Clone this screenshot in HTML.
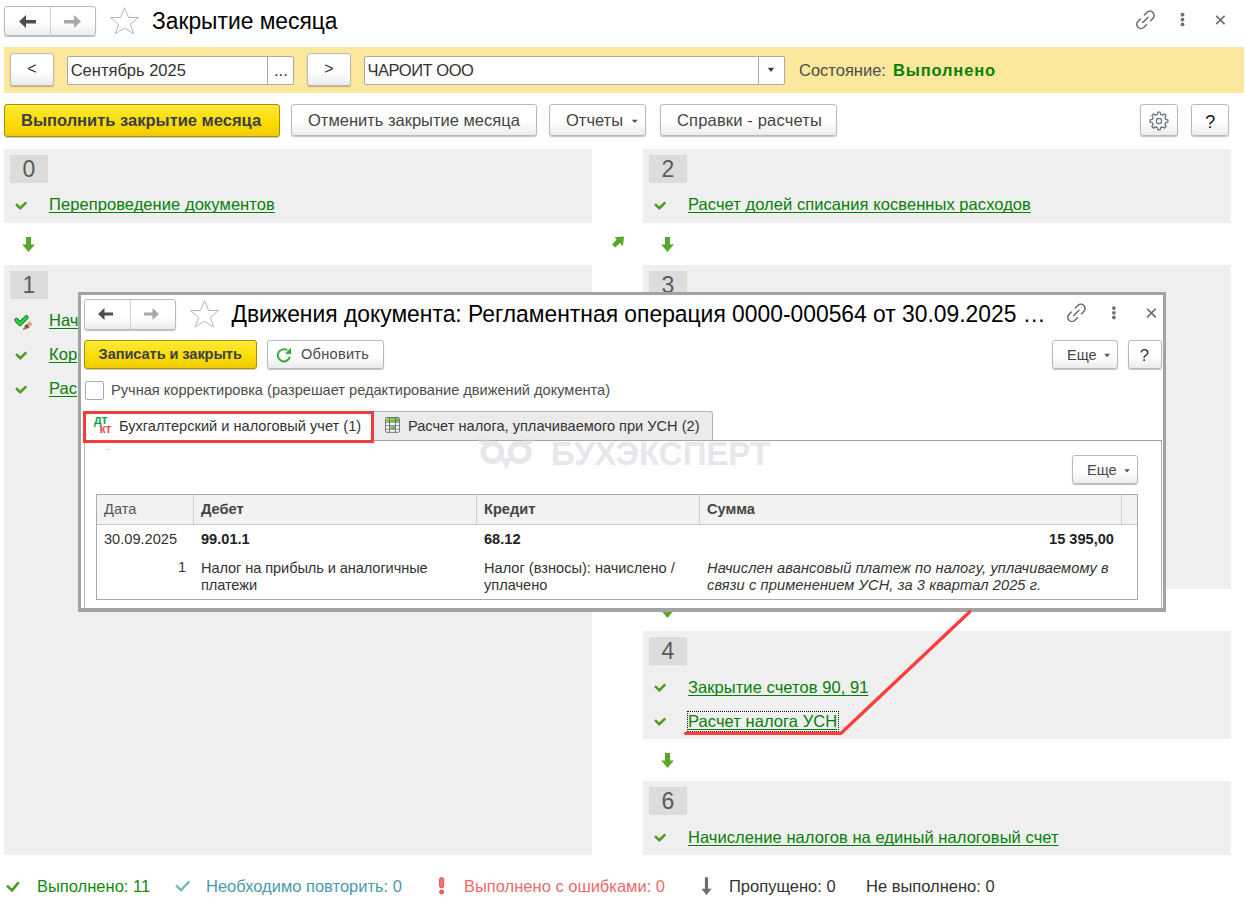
<!DOCTYPE html>
<html><head><meta charset="utf-8">
<style>
*{box-sizing:border-box;margin:0;padding:0}
html,body{width:1245px;height:906px;overflow:hidden;background:#fff;font-family:"Liberation Sans",sans-serif;color:#333}
.a{position:absolute}
.t{position:absolute;white-space:nowrap;line-height:1}
.btn{position:absolute;border:1px solid #b9b9b9;border-radius:3px;background:linear-gradient(#fff 0%,#fff 55%,#ececec 100%);box-shadow:0 1px 1px rgba(0,0,0,.25)}
.ybtn{position:absolute;border:1px solid #a99000;border-radius:3px;background:linear-gradient(#ffe93a 0%,#fbdb00 60%,#efcc00 100%);box-shadow:0 1px 1px rgba(0,0,0,.2)}
.inp{position:absolute;border:1px solid #a9a9a9;border-radius:2px;background:#fff}
.panel{position:absolute;background:#efefef}
.num{position:absolute;width:38px;height:28px;background:#dcdcdc;color:#5a5a5a;font-size:23px;line-height:28px;text-align:center}
.lnk{position:absolute;white-space:nowrap;color:#058005;text-decoration:underline;text-decoration-skip-ink:none;text-underline-offset:2px;font-size:16.5px;line-height:1;letter-spacing:0.065px}
.chk{position:absolute;width:13px;height:10px}
</style></head><body>

<!-- Header -->
<div class="btn" style="left:4px;top:6px;width:92px;height:30px"></div>
<div class="a" style="left:50px;top:7px;width:1px;height:29px;background:#cfcfcf"></div>
<svg class="a" style="left:19px;top:15px" width="18" height="14" viewBox="0 0 18 14"><path d="M0 6.5 L7 0 L7 5 L17 5 L17 8.5 L7 8.5 L7 13 Z" fill="#4d4d4d"/></svg>
<svg class="a" style="left:64px;top:15px" width="18" height="14" viewBox="0 0 18 14"><path d="M17 6.5 L10 0 L10 5 L0 5 L0 8.5 L10 8.5 L10 13 Z" fill="#a8a8a8"/></svg>
<svg class="a" style="left:0;top:0;overflow:visible" width="1" height="1"><path d="M124.5 7.8 L128.6 17.5 L138.4 17.5 L130.3 24.4 L133.8 33.8 L124.5 28 L115.2 33.8 L118.6 24.4 L110.6 17.5 L120.4 17.5 Z" fill="none" stroke="#b1b7bf" stroke-width="1"/></svg>
<div class="t" style="left:152px;top:10px;font-size:22.8px;color:#000;transform:scaleY(1.08);transform-origin:0 19.3px">Закрытие месяца</div>

<!-- Top right icons -->
<svg class="a" style="left:0;top:0;overflow:visible" width="1" height="1"><g transform="translate(1145.4 19.9) rotate(-45)" fill="none" stroke="#666" stroke-width="1.4" stroke-linecap="round"><path d="M2.7 -4.2 L6.3 -4.2 A4.2 4.2 0 0 1 6.3 4.2 L2.9 4.2"/><path d="M-2.7 4.2 L-6.3 4.2 A4.2 4.2 0 0 1 -6.3 -4.2 L-2.9 -4.2"/><path d="M-3.8 0 L3.8 0"/></g></svg>
<svg class="a" style="left:0;top:0;overflow:visible" width="1" height="1"><g fill="#707070"><circle cx="1182.5" cy="14.7" r="1.9"/><circle cx="1182.5" cy="19.549999999999997" r="1.9"/><circle cx="1182.5" cy="24.4" r="1.9"/></g></svg>
<svg class="a" style="left:0;top:0;overflow:visible" width="1" height="1"><path d="M1216.2 15.7 L1224.6000000000001 24.099999999999998 M1224.6000000000001 15.7 L1216.2 24.099999999999998" stroke="#6a6a6a" stroke-width="1.6"/></svg>

<!-- Yellow bar -->
<div class="a" style="left:4px;top:47px;width:1240px;height:46px;background:#fbe89c"></div>
<div class="btn" style="left:10px;top:53px;width:44px;height:33px"></div>
<div class="t" style="left:27.3px;top:61px;font-size:16px;color:#333">&lt;</div>
<div class="inp" style="left:67px;top:56px;width:227px;height:29px"></div>
<div class="a" style="left:267px;top:57px;width:1px;height:27px;background:#a9a9a9"></div>
<div class="t" style="left:70.7px;top:62px;font-size:16.5px;color:#333">Сентябрь 2025</div>
<div class="t" style="left:274px;top:62px;font-size:16.5px;color:#333">...</div>
<div class="btn" style="left:307px;top:53px;width:44px;height:33px"></div>
<div class="t" style="left:324.2px;top:61px;font-size:16px;color:#333">&gt;</div>
<div class="inp" style="left:364px;top:56px;width:421px;height:29px"></div>
<div class="a" style="left:758px;top:57px;width:1px;height:27px;background:#a9a9a9"></div>
<div class="t" style="left:367.5px;top:62px;font-size:16.5px;color:#333;letter-spacing:-0.45px">ЧАРОИТ ООО</div>
<svg class="a" style="left:0;top:0;overflow:visible" width="1" height="1"><path d="M767.8 67.8 L774.2 67.8 L771 72 Z" fill="#3a3a3a"/></svg>
<div class="t" style="left:799px;top:62px;font-size:16.5px;color:#4d4d4d">Состояние:</div>
<div class="t" style="left:893px;top:62px;font-size:16.5px;font-weight:bold;color:#0a800a;letter-spacing:0.85px">Выполнено</div>

<!-- Toolbar -->
<div class="ybtn" style="left:4px;top:104px;width:276px;height:33px"></div>
<div class="t" style="left:21px;top:112px;font-size:16.5px;font-weight:bold;color:#3b3f4a">Выполнить закрытие месяца</div>
<div class="btn" style="left:291px;top:104px;width:246px;height:32px"></div>
<div class="t" style="left:308px;top:112px;font-size:16.5px;color:#444">Отменить закрытие месяца</div>
<div class="btn" style="left:549px;top:104px;width:97px;height:32px"></div>
<div class="t" style="left:566px;top:112px;font-size:16.5px;color:#444">Отчеты</div>
<svg class="a" style="left:0;top:0;overflow:visible" width="1" height="1"><path d="M631.6 119.8 L637.8 119.8 L634.7 123 Z" fill="#555"/></svg>
<div class="btn" style="left:660px;top:104px;width:177px;height:32px"></div>
<div class="t" style="left:677px;top:112px;font-size:16.5px;color:#444;letter-spacing:0.17px">Справки - расчеты</div>
<div class="btn" style="left:1140px;top:104px;width:38px;height:32px"></div>
<div class="btn" style="left:1191px;top:104px;width:38px;height:32px"></div>
<div class="t" style="left:1205.2px;top:113.3px;font-size:18px;color:#111">?</div>

<!-- Panels left -->
<div class="panel" style="left:4px;top:149px;width:588px;height:74px"></div>
<div class="num" style="left:10px;top:155px">0</div>
<div class="lnk" style="left:49px;top:196px">Перепроведение документов</div>

<div class="panel" style="left:4px;top:265px;width:588px;height:590px"></div>
<div class="num" style="left:10px;top:271px">1</div>
<div class="lnk" style="left:49px;top:312px">Нач</div>
<div class="lnk" style="left:49px;top:346px">Кор</div>
<div class="lnk" style="left:49px;top:380px">Рас</div>

<!-- Panels right -->
<div class="panel" style="left:643px;top:149px;width:588px;height:74px"></div>
<div class="num" style="left:649px;top:155px">2</div>
<div class="lnk" style="left:688px;top:196px">Расчет долей списания косвенных расходов</div>

<div class="panel" style="left:643px;top:265px;width:588px;height:324px"></div>
<div class="num" style="left:649px;top:271px">3</div>

<div class="panel" style="left:643px;top:631px;width:588px;height:108px"></div>
<div class="num" style="left:649px;top:637px">4</div>
<div class="lnk" style="left:688px;top:679px">Закрытие счетов 90, 91</div>
<div class="lnk" style="left:688px;top:713px">Расчет налога УСН</div>

<div class="panel" style="left:643px;top:781px;width:588px;height:74px"></div>
<div class="num" style="left:649px;top:787px">6</div>
<div class="lnk" style="left:688px;top:829px">Начисление налогов на единый налоговый счет</div>


<!-- icons: checks & arrows -->
<svg width="0" height="0" style="position:absolute"><defs>
<path id="ck" d="M2 4.2 L6.3 8.2 L12.3 2.4" fill="none" stroke="#4a9c1c" stroke-width="2.5"/>
<path id="dn" d="M4 0 H9 V7.5 H12.8 L6.5 15 L0.2 7.5 H4 Z" fill="#58a62a"/>
</defs></svg>
<svg class="a" style="left:14px;top:200px" width="14" height="11"><use href="#ck"/></svg>
<svg class="a" style="left:653px;top:200px" width="14" height="11"><use href="#ck"/></svg>
<svg class="a" style="left:14px;top:350px" width="14" height="11"><use href="#ck"/></svg>
<svg class="a" style="left:14px;top:384px" width="14" height="11"><use href="#ck"/></svg>
<svg class="a" style="left:653px;top:682px" width="14" height="11"><use href="#ck"/></svg>
<svg class="a" style="left:653px;top:716px" width="14" height="11"><use href="#ck"/></svg>
<svg class="a" style="left:653px;top:832px" width="14" height="11"><use href="#ck"/></svg>
<svg class="a" style="left:0;top:0;overflow:visible" width="1" height="1"><path d="M16.5 320 L19.9 323.9 L26.4 317.4" fill="none" stroke="#157a25" stroke-width="4.4" stroke-linecap="round" stroke-linejoin="round"/><path d="M16.5 320 L19.9 323.9 L26.4 317.4" fill="none" stroke="#26dc3c" stroke-width="2.6" stroke-linecap="round" stroke-linejoin="round"/><path d="M23.30 329.50 L27.04 328.98 L24.47 325.91 Z" fill="#b7845a"/><path d="M27.04 328.98 L29.34 327.06 L26.78 323.99 L24.47 325.91 Z" fill="#7b4d2c"/><path d="M29.34 327.06 L32.48 324.43 L29.92 321.37 L26.78 323.99 Z" fill="#d6a57c"/><path d="M23.30 329.50 L24.87 329.36 L23.72 327.98 Z" fill="#4a2e1a"/></svg>
<svg class="a" style="left:22px;top:237px" width="13" height="15"><use href="#dn"/></svg>
<svg class="a" style="left:661px;top:237px" width="13" height="15"><use href="#dn"/></svg>
<svg class="a" style="left:661px;top:753px" width="13" height="15"><use href="#dn"/></svg>
<svg class="a" style="left:661px;top:603px" width="13" height="15"><use href="#dn"/></svg>
<svg class="a" style="left:610px;top:235px" width="16" height="16" viewBox="0 0 16 16"><path d="M4.5 2.2 L14 1.4 L13 11 L9.8 7.9 L5.3 12.6 L2 9.4 L6.6 4.6 Z" fill="#58a62a"/></svg>

<!-- gear -->
<svg class="a" style="left:1148px;top:110px" width="22" height="22" viewBox="0 0 22 22"><g transform="translate(11 11)" fill="none" stroke="#65707b" stroke-width="1.25" stroke-linejoin="round"><path d="M6.59 -1.69 L8.93 -1.13 L8.93 1.13 L6.59 1.69 L5.85 3.46 L7.11 5.52 L5.52 7.11 L3.46 5.85 L1.69 6.59 L1.13 8.93 L-1.13 8.93 L-1.69 6.59 L-3.46 5.85 L-5.52 7.11 L-7.11 5.52 L-5.85 3.46 L-6.59 1.69 L-8.93 1.13 L-8.93 -1.13 L-6.59 -1.69 L-5.85 -3.46 L-7.11 -5.52 L-5.52 -7.11 L-3.46 -5.85 L-1.69 -6.59 L-1.13 -8.93 L1.13 -8.93 L1.69 -6.59 L3.46 -5.85 L5.52 -7.11 L7.11 -5.52 L5.85 -3.46 Z"/><circle r="2.6"/></g></svg>

<!-- Status bar -->
<svg class="a" style="left:6px;top:881px" width="14" height="11"><path d="M1 4.6 L6 9.4 L12.6 1.4" fill="none" stroke="#4a9c1c" stroke-width="2.6"/></svg>
<svg class="a" style="left:175px;top:880px" width="16" height="12"><path d="M1 5.4 L6 10.2 L14.4 1.4" fill="none" stroke="#7ab9b2" stroke-width="2.4"/></svg>
<svg class="a" style="left:0;top:0;overflow:visible" width="1" height="1"><rect x="439.6" y="877.6" width="4.1" height="10.2" rx="1.9" fill="#fb7070" stroke="#cf4646" stroke-width="0.9"/><ellipse cx="441.65" cy="892" rx="2.1" ry="1.85" fill="#f56666" stroke="#cf4646" stroke-width="0.9"/></svg>
<svg class="a" style="left:0;top:0;overflow:visible" width="1" height="1"><path d="M704.9 877.2 H708.1 V888.8 H711.7 L706.5 895.1 L701.3 888.8 H704.9 Z" fill="#6e6e6e"/></svg>

<div class="t" style="left:37px;top:878px;font-size:16.5px;color:#128a12">Выполнено: 11</div>
<div class="t" style="left:206px;top:878px;font-size:16.5px;color:#4a9aaa">Необходимо повторить: 0</div>
<div class="t" style="left:464px;top:878px;font-size:16.5px;color:#ec6a6a">Выполнено с ошибками: 0</div>
<div class="t" style="left:729px;top:878px;font-size:16.5px;color:#333">Пропущено: 0</div>
<div class="t" style="left:866px;top:878px;font-size:16.5px;color:#333">Не выполнено: 0</div>

<!-- Dialog -->
<div class="a" style="left:78px;top:292px;width:1088px;height:320px;border:3px solid #a3a3a3;border-bottom-width:4px;background:#fff"></div>
<div class="btn" style="left:84px;top:299px;width:92px;height:31px"></div>
<div class="a" style="left:130px;top:300px;width:1px;height:29px;background:#cfcfcf"></div>
<svg class="a" style="left:98px;top:308px" width="16" height="13" viewBox="0 0 16 13"><path d="M0 6 L6.5 0 L6.5 4.5 L15 4.5 L15 7.5 L6.5 7.5 L6.5 12 Z" fill="#4d4d4d"/></svg>
<svg class="a" style="left:144px;top:308px" width="16" height="13" viewBox="0 0 16 13"><path d="M15 6 L8.5 0 L8.5 4.5 L0 4.5 L0 7.5 L8.5 7.5 L8.5 12 Z" fill="#a8a8a8"/></svg>
<svg class="a" style="left:0;top:0;overflow:visible" width="1" height="1"><path d="M204.45 300.8 L208.6 310.5 L218.4 310.5 L210.4 317.5 L213.8 327.1 L204.45 321.2 L195.1 327.1 L198.5 317.5 L190.5 310.5 L200.3 310.5 Z" fill="none" stroke="#b1b7bf" stroke-width="1"/></svg>
<div class="t" style="left:231.5px;top:303px;font-size:22.85px;color:#000;transform:scaleY(1.08);transform-origin:0 19.3px">Движения документа: Регламентная операция 0000-000564 от 30.09.2025 …</div>
<svg class="a" style="left:0;top:0;overflow:visible" width="1" height="1"><g transform="translate(1076.4 312.9) rotate(-45)" fill="none" stroke="#666" stroke-width="1.4" stroke-linecap="round"><path d="M2.7 -4.2 L6.3 -4.2 A4.2 4.2 0 0 1 6.3 4.2 L2.9 4.2"/><path d="M-2.7 4.2 L-6.3 4.2 A4.2 4.2 0 0 1 -6.3 -4.2 L-2.9 -4.2"/><path d="M-3.8 0 L3.8 0"/></g></svg>
<svg class="a" style="left:0;top:0;overflow:visible" width="1" height="1"><g fill="#707070"><circle cx="1113.9" cy="308.1" r="1.9"/><circle cx="1113.9" cy="312.8" r="1.9"/><circle cx="1113.9" cy="317.5" r="1.9"/></g></svg>
<svg class="a" style="left:0;top:0;overflow:visible" width="1" height="1"><path d="M1147.1000000000001 308.8 L1155.7 317.40000000000003 M1155.7 308.8 L1147.1000000000001 317.40000000000003" stroke="#6a6a6a" stroke-width="1.6"/></svg>

<div class="ybtn" style="left:84px;top:340px;width:173px;height:29px"></div>
<div class="t" style="left:98.6px;top:347px;font-size:14.6px;font-weight:bold;color:#3b3f4a;letter-spacing:-0.08px">Записать и закрыть</div>
<div class="btn" style="left:267px;top:340px;width:117px;height:29px"></div>
<svg class="a" style="left:274px;top:346px" width="20" height="20" viewBox="0 0 20 20"><path d="M15.73 10.88 A6.1 6.1 0 1 1 13.3 4.3" fill="none" stroke="#3cae3c" stroke-width="2"/><path d="M17 1.8 L17 8 L10.9 7.8 Z" fill="#34a834"/></svg>
<div class="t" style="left:301px;top:347px;font-size:14.6px;color:#4a4a4a;letter-spacing:0.25px">Обновить</div>
<div class="btn" style="left:1052px;top:340px;width:66px;height:29px"></div>
<div class="t" style="left:1067px;top:348.3px;font-size:14.6px;color:#444">Еще</div>
<svg class="a" style="left:0;top:0;overflow:visible" width="1" height="1"><path d="M1104.3 353.8 L1110 353.8 L1107.15 357.2 Z" fill="#555"/></svg>
<div class="btn" style="left:1128px;top:340px;width:34px;height:29px"></div>
<div class="t" style="left:1139.7px;top:347.1px;font-size:16.5px;color:#333">?</div>

<div class="a" style="left:85px;top:381px;width:19px;height:19px;border:1px solid #ababab;border-radius:2px;background:#fff"></div>
<div class="t" style="left:111px;top:383px;font-size:14.6px;color:#4d4d4d">Ручная корректировка (разрешает редактирование движений документа)</div>

<!-- tabs -->
<div class="a" style="left:84px;top:440px;width:1078px;height:168px;border:1px solid #b4b4b4;border-bottom:none;background:#fff"></div>
<div class="a" style="left:373px;top:411px;width:340px;height:29px;border:1px solid #b4b4b4;border-bottom:none;border-radius:0 3px 0 0;background:#ebebeb"></div>
<svg class="a" style="left:0;top:0;overflow:visible" width="1" height="1"><defs><linearGradient id="gg" x1="0" y1="0" x2="1" y2="1"><stop offset="0" stop-color="#b0e66a"/><stop offset="1" stop-color="#4fa82a"/></linearGradient></defs><rect x="385.6" y="417.5" width="13.8" height="14.8" rx="1" fill="#fff" stroke="#6b6f78" stroke-width="1"/><rect x="386.1" y="418" width="12.8" height="3.9" fill="url(#gg)"/><rect x="389.9" y="425.9" width="5.1" height="3.3" fill="url(#gg)"/><path d="M386 422.2 H399 M386 425.6 H399 M386 429.3 H399" stroke="#7a7e86" stroke-width="0.9"/><path d="M389.5 418 V432 M395.4 418 V432" stroke="#6b6f78" stroke-width="1"/></svg>
<div class="t" style="left:408px;top:419px;font-size:14.6px;color:#333">Расчет налога, уплачиваемого при УСН (2)</div>
<div class="a" style="left:84px;top:412px;width:289px;height:30px;background:#fff"></div>
<div class="t" style="left:94px;top:413.5px;font-size:12px;font-weight:bold;color:#1f9e4e">дт</div>
<div class="t" style="left:99.5px;top:422.5px;font-size:12px;font-weight:bold;color:#e05050">кт</div>
<div class="t" style="left:119px;top:419px;font-size:14.6px;color:#333">Бухгалтерский и налоговый учет (1)</div>
<div class="a" style="left:83px;top:411px;width:291px;height:32px;border:3px solid #f53a3a"></div>

<div class="a" style="left:107px;top:449px;width:1px;height:1px;background:#999"></div>
<!-- watermark -->
<svg class="a" style="left:0;top:0;overflow:visible" width="1" height="1"><g fill="#e6e6eb"><path fill-rule="evenodd" d="M480.6 452.4 a11.9 11.9 0 1 0 23.8 0 a11.9 11.9 0 1 0 -23.8 0 Z M486 452.4 a6.5 6.5 0 1 0 13 0 a6.5 6.5 0 1 0 -13 0 Z"/><path fill-rule="evenodd" d="M507.7 452.4 a11.9 11.9 0 1 0 23.8 0 a11.9 11.9 0 1 0 -23.8 0 Z M513.1 452.4 a6.5 6.5 0 1 0 13 0 a6.5 6.5 0 1 0 -13 0 Z"/><path d="M500.5 458 L512 458 L506.4 469.6 Z"/><path d="M473 436 L480.5 436 L491.5 441.5 L484 446 Z"/><path d="M539.1 436 L531.6 436 L520.6 441.5 L528.1 446 Z"/></g></svg>
<div class="t" style="left:551px;top:437px;font-size:33px;font-weight:bold;color:#e6e6eb">БУХЭКСПЕРТ</div>
<div class="a" style="left:374px;top:440px;width:788px;height:1px;background:rgba(150,150,150,.55)"></div>

<div class="btn" style="left:1072px;top:455px;width:66px;height:29px"></div>
<div class="t" style="left:1087px;top:462.7px;font-size:14.6px;color:#4a4a4a">Еще</div>
<svg class="a" style="left:0;top:0;overflow:visible" width="1" height="1"><path d="M1124.2 469.2 L1129.9 469.2 L1127.05 472.4 Z" fill="#555"/></svg>

<!-- table -->
<div class="a" style="left:96px;top:494px;width:1042px;height:106px;border:1px solid #a9a9a9;background:#fff"></div>
<div class="a" style="left:97px;top:495px;width:1040px;height:30px;background:#f2f2f2;border-bottom:1px solid #c8c8c8"></div>
<div class="a" style="left:193px;top:495px;width:1px;height:29px;background:#d0d0d0"></div>
<div class="a" style="left:476px;top:495px;width:1px;height:29px;background:#d0d0d0"></div>
<div class="a" style="left:699px;top:495px;width:1px;height:29px;background:#d0d0d0"></div>
<div class="a" style="left:1121px;top:495px;width:1px;height:29px;background:#d0d0d0"></div>
<div class="t" style="left:104px;top:502px;font-size:14.6px;color:#555">Дата</div>
<div class="t" style="left:201px;top:502px;font-size:14.6px;font-weight:bold;color:#444">Дебет</div>
<div class="t" style="left:484px;top:502px;font-size:14.6px;font-weight:bold;color:#444">Кредит</div>
<div class="t" style="left:707px;top:502px;font-size:14.6px;font-weight:bold;color:#444">Сумма</div>
<div class="t" style="left:104px;top:532px;font-size:14.6px;color:#333">30.09.2025</div>
<div class="t" style="left:201px;top:532px;font-size:14.6px;font-weight:bold;color:#222">99.01.1</div>
<div class="t" style="left:484px;top:532px;font-size:14.6px;font-weight:bold;color:#222">68.12</div>
<div class="t" style="left:1114px;top:532px;font-size:14.6px;font-weight:bold;color:#222;transform:translateX(-100%)">15 395,00</div>
<div class="t" style="left:178px;top:560px;font-size:14.6px;color:#333">1</div>
<div class="a" style="left:201px;top:560px;font-size:14.6px;line-height:17px;color:#333;white-space:nowrap;letter-spacing:-0.09px">Налог на прибыль и аналогичные<br>платежи</div>
<div class="a" style="left:484px;top:560px;font-size:14.6px;line-height:17px;color:#333;white-space:nowrap">Налог (взносы): начислено /<br>уплачено</div>
<div class="a" style="left:707px;top:560px;font-size:14.6px;line-height:17px;color:#333;font-style:italic;white-space:nowrap;letter-spacing:0.11px">Начислен авансовый платеж по налогу, уплачиваемому в<br>связи с применением УСН, за 3 квартал 2025 г.</div>


<!-- annotation -->
<div class="a" style="left:687px;top:711px;width:152px;height:21px;border:1px dotted #111"></div>
<svg class="a" style="left:0;top:0" width="1245" height="906"><path d="M685.5 733.3 L841 733.3 L969.8 611.8" fill="none" stroke="#fb3d3d" stroke-width="3.3" stroke-linecap="round" stroke-linejoin="round"/></svg>
</body></html>
